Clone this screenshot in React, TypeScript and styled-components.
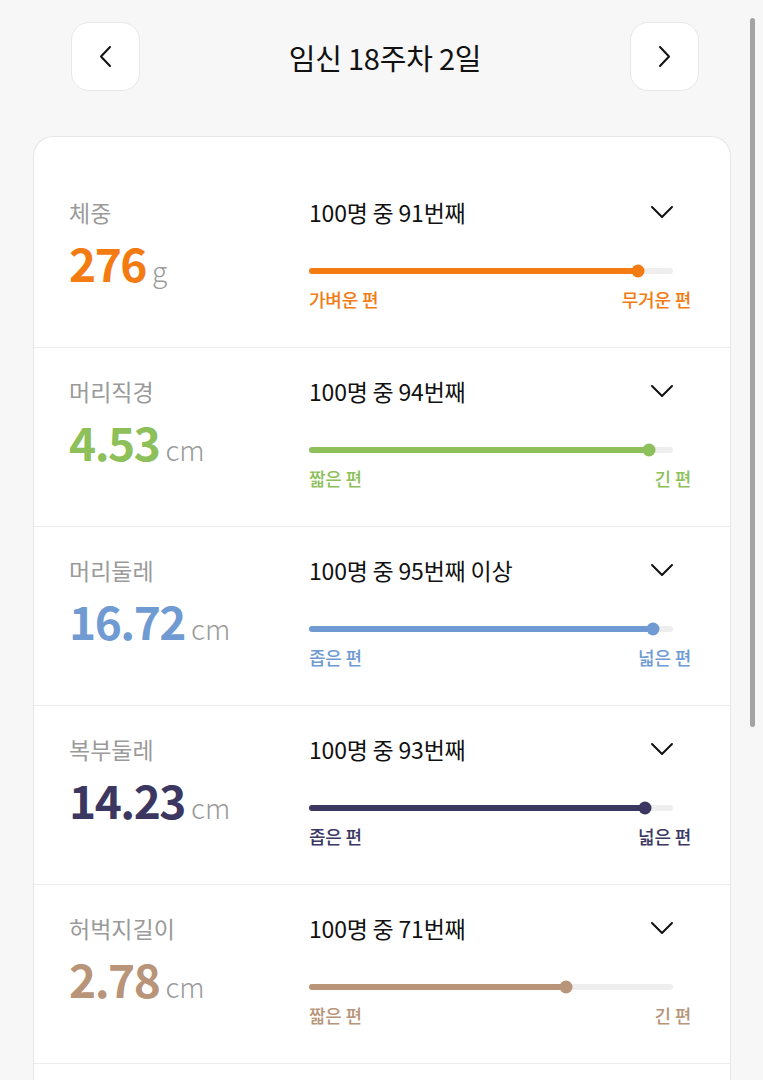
import styled, { createGlobalStyle } from "styled-components";

const GlobalStyle = createGlobalStyle`
  html, body {
    margin: 0;
    padding: 0;
    background: #f7f7f7;
  }
  body {
    font-family: "Noto Sans CJK KR", "Noto Sans", sans-serif;
    color: #111;
  }
`;

const Page = styled.div`
  width: 763px;
  height: 1080px;
  overflow: hidden;
`;

const Header = styled.div`
  display: flex;
  align-items: center;
  justify-content: space-between;
  padding: 22px 64px 0 71px;
  height: 69px;
`;

const NavButton = styled.button`
  width: 69px;
  height: 69px;
  border-radius: 18px;
  border: 1px solid #e8e8e8;
  background: #fff;
  display: flex;
  align-items: center;
  justify-content: center;
  padding: 0;
  cursor: pointer;
`;

const Title = styled.h1`
  margin: 0;
  font-size: 29px;
  font-weight: 400;
  letter-spacing: -0.2px;
  color: #111;
`;

const Card = styled.div`
  margin: 45px 32px 0 33px;
  background: #fff;
  border: 1px solid #e6e6e6;
  border-bottom: none;
  border-radius: 20px 20px 0 0;
  padding-top: 32px;
`;

const Row = styled.div`
  display: grid;
  grid-template-columns: 240px 1fr;
  height: 150px;
  padding: 28px 39px 0 35px;
  border-bottom: 1px solid #ebebeb;
`;

const Left = styled.div`
  display: flex;
  flex-direction: column;
`;

const Label = styled.div`
  font-size: 23px;
  line-height: 30px;
  color: #9a9a9a;
`;

const ValueLine = styled.div`
  margin-top: 6px;
  display: flex;
  align-items: baseline;
  gap: 6px;
`;

const Value = styled.span<{ $color: string }>`
  font-size: 46px;
  line-height: 58px;
  font-weight: 700;
  letter-spacing: -1.5px;
  color: ${(p) => p.$color};
`;

const Unit = styled.span`
  font-size: 28px;
  font-weight: 300;
  color: #9a9a9a;
`;

const Right = styled.div`
  display: flex;
  flex-direction: column;
`;

const RankLine = styled.div`
  display: flex;
  align-items: center;
  justify-content: space-between;
  height: 30px;
  padding-right: 17px;
`;

const Rank = styled.span`
  font-size: 23px;
  letter-spacing: -0.2px;
  color: #111;
`;

const Track = styled.div`
  position: relative;
  margin-top: 41px;
  margin-right: 18px;
  height: 6px;
  border-radius: 3px;
  background: #eeeeee;
`;

const Fill = styled.div<{ $color: string }>`
  height: 100%;
  border-radius: 3px;
  background: ${(p) => p.$color};
`;

const Dot = styled.div<{ $color: string }>`
  position: absolute;
  top: 50%;
  width: 13px;
  height: 13px;
  border-radius: 50%;
  transform: translate(-50%, -50%);
  background: ${(p) => p.$color};
`;

const Ends = styled.div<{ $color: string }>`
  display: flex;
  justify-content: space-between;
  margin-top: 13px;
  font-size: 18px;
  line-height: 24px;
  font-weight: 500;
  letter-spacing: -0.2px;
  color: ${(p) => p.$color};
`;

const ScrollThumb = styled.div`
  position: fixed;
  top: 18px;
  left: 750px;
  width: 5px;
  height: 709px;
  border-radius: 3px;
  background: #a3a3a3;
`;

const Chevron = ({ dir }: { dir: "left" | "right" | "down" }) => {
  if (dir === "down") {
    return (
      <svg width="24" height="14" viewBox="0 0 24 14" fill="none">
        <path d="M2 2l10 10L22 2" stroke="#111" strokeWidth="2" strokeLinecap="round" strokeLinejoin="round" />
      </svg>
    );
  }
  const d = dir === "left" ? "M11 2L2 11.5 11 21" : "M2 2l9 9.5L2 21";
  return (
    <svg width="13" height="23" viewBox="0 0 13 23" fill="none">
      <path d={d} stroke="#111" strokeWidth="2" strokeLinecap="round" strokeLinejoin="round" />
    </svg>
  );
};

const metrics = [
  { label: "체중", value: "276", unit: "g", rank: "100명 중 91번째", pct: 90.4, color: "#f47a12", low: "가벼운 편", high: "무거운 편" },
  { label: "머리직경", value: "4.53", unit: "cm", rank: "100명 중 94번째", pct: 93.4, color: "#8dc05a", low: "짧은 편", high: "긴 편" },
  { label: "머리둘레", value: "16.72", unit: "cm", rank: "100명 중 95번째 이상", pct: 94.5, color: "#6f9bd2", low: "좁은 편", high: "넓은 편" },
  { label: "복부둘레", value: "14.23", unit: "cm", rank: "100명 중 93번째", pct: 92.3, color: "#3b3761", low: "좁은 편", high: "넓은 편" },
  { label: "허벅지길이", value: "2.78", unit: "cm", rank: "100명 중 71번째", pct: 70.6, color: "#b89479", low: "짧은 편", high: "긴 편" },
];

export default function App() {
  return (
    <Page>
      <GlobalStyle />
      <Header>
        <NavButton aria-label="이전">
          <Chevron dir="left" />
        </NavButton>
        <Title>임신 18주차 2일</Title>
        <NavButton aria-label="다음">
          <Chevron dir="right" />
        </NavButton>
      </Header>
      <Card>
        {metrics.map((m) => (
          <Row key={m.label}>
            <Left>
              <Label>{m.label}</Label>
              <ValueLine>
                <Value $color={m.color}>{m.value}</Value>
                <Unit>{m.unit}</Unit>
              </ValueLine>
            </Left>
            <Right>
              <RankLine>
                <Rank>{m.rank}</Rank>
                <Chevron dir="down" />
              </RankLine>
              <Track>
                <Fill $color={m.color} style={{ width: `${m.pct}%` }} />
                <Dot $color={m.color} style={{ left: `${m.pct}%` }} />
              </Track>
              <Ends $color={m.color}>
                <span>{m.low}</span>
                <span>{m.high}</span>
              </Ends>
            </Right>
          </Row>
        ))}
        <Row />
      </Card>
      <ScrollThumb />
    </Page>
  );
}
